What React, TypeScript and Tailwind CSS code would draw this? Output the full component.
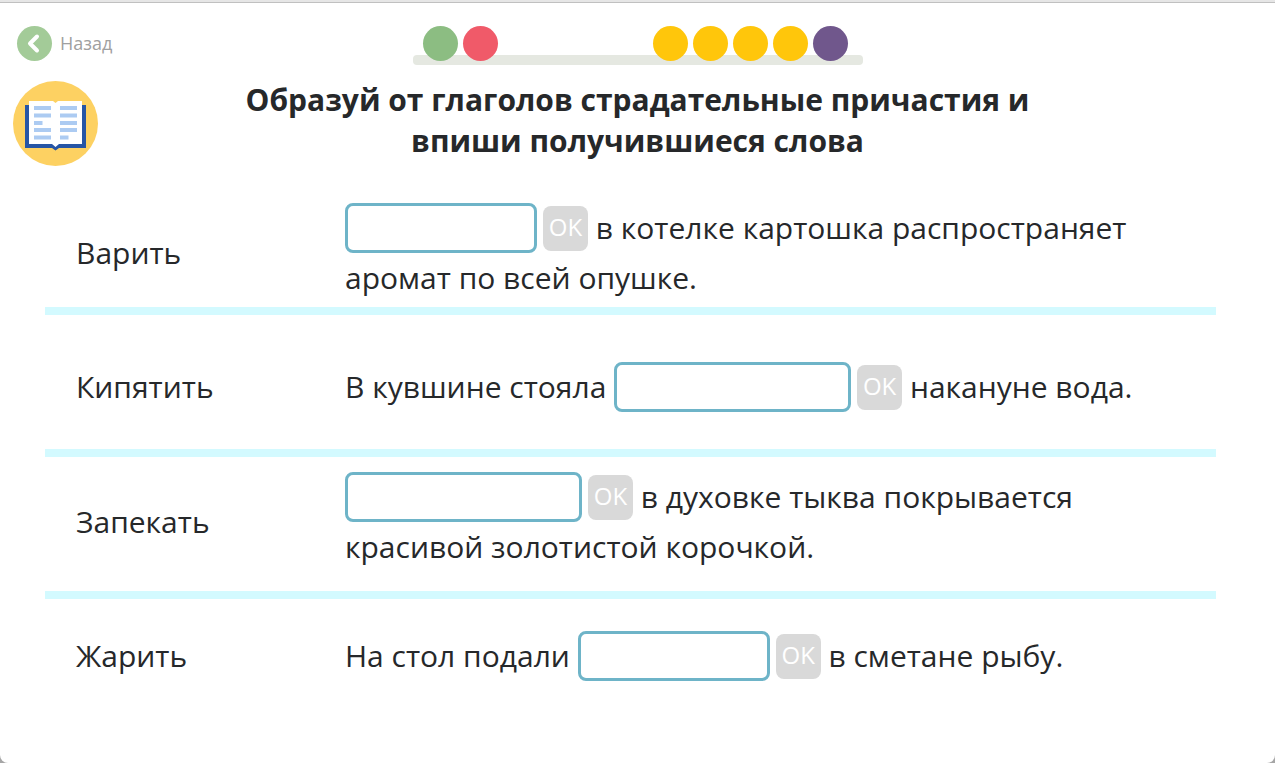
import React, { useState } from 'react';

interface Exercise {
  id: string;
  verb: string;
  before: string;
  after: string;
  inputClass: string;
  rowClass: string;
}

const EXERCISES: Exercise[] = [
  {
    id: 'varit',
    verb: 'Варить',
    before: '',
    after: 'в котелке картошка распространяет аромат по всей опушке.',
    inputClass: 'w-48',
    rowClass: 'pt-[26px] border-b-8',
  },
  {
    id: 'kipyatit',
    verb: 'Кипятить',
    before: 'В кувшине стояла',
    after: 'накануне вода.',
    inputClass: 'w-[237px]',
    rowClass: 'pt-2.5 border-b-8',
  },
  {
    id: 'zapekat',
    verb: 'Запекать',
    before: '',
    after: 'в духовке тыква покрывается красивой золотистой корочкой.',
    inputClass: 'w-[237px]',
    rowClass: 'pb-1 border-b-8',
  },
  {
    id: 'zharit',
    verb: 'Жарить',
    before: 'На стол подали',
    after: 'в сметане рыбу.',
    inputClass: 'w-48',
    rowClass: 'pb-7',
  },
];

const DONE_STEPS = ['bg-[#8cbd82]', 'bg-[#f05a69]'];
const NEXT_STEPS = ['bg-[#ffc60b]', 'bg-[#ffc60b]', 'bg-[#ffc60b]', 'bg-[#ffc60b]', 'bg-[#70578c]'];

const BookIcon: React.FC = () => (
  <svg viewBox="0 0 85 85" className="w-[85px] h-[85px]" aria-hidden="true">
    <circle cx="42.5" cy="42.5" r="42.5" fill="#fdd162" />
    <path d="M12 24h61v43H46l-3.500 2.500L39 67H12z" fill="#2655a5" />
    <path d="M16 20h24l2.500 2 2.500-2h24v43H46l-3.500 3-3.500-3H16z" fill="#fff" />
    <path
      d="M21 25h17v4H21zM21 32.500h17v4H21zM21 40h8.500v4H21zM21 47h17v4H21zM21 54.500h17v4H21zM47 25h17v4H47zM47 32.500h17v4H47zM47 40h17v4H47zM47 47h17v4H47zM47 54.500h8.500v4H47z"
      fill="#accbf2"
    />
  </svg>
);

const Progress: React.FC = () => (
  <div className="relative w-[450px] h-[39px] pl-2.5 pr-[15px] flex justify-between">
    <div className="absolute inset-x-0 bottom-0 h-2.5 rounded bg-[#e5e8e1]" />
    <div className="relative flex gap-[5px]">
      {DONE_STEPS.map((color, i) => (
        <span key={i} className={`w-[35px] h-[35px] rounded-full ${color}`} />
      ))}
    </div>
    <div className="relative flex gap-[5px]">
      {NEXT_STEPS.map((color, i) => (
        <span key={i} className={`w-[35px] h-[35px] rounded-full ${color}`} />
      ))}
    </div>
  </div>
);

const ExerciseRow: React.FC<{ exercise: Exercise }> = ({ exercise }) => {
  const [value, setValue] = useState('');
  const { id, verb, before, after, inputClass, rowClass } = exercise;

  return (
    <div className={`flex items-center min-h-[142px] border-[#d3faff] ${rowClass}`}>
      <label htmlFor={id} className="w-[300px] shrink-0 pl-[31px] leading-[50px]">
        {verb}
      </label>
      <p className="flex-1 pr-8 leading-[50px]">
        {before}
        {before && ' '}
        <input
          id={id}
          type="text"
          value={value}
          onChange={e => setValue(e.target.value)}
          className={`h-[50px] px-3 align-top bg-white border-3 border-[#6eb4c8] rounded-lg outline-none ${inputClass}`}
        />
        <button
          type="button"
          className="w-[45px] h-[45px] mt-[3px] ml-1.5 pb-1 align-top rounded-lg bg-[#d9d9d9] text-white text-2xl leading-none"
        >
          OK
        </button>{' '}
        {after}
      </p>
    </div>
  );
};

export default function App() {
  return (
    <div className="min-h-screen flex flex-col bg-[#a6a6a6] font-['Open_Sans','Noto_Sans',sans-serif] text-[#26282a]">
      <div className="h-[3px] bg-[#e6e6e6] border-b border-[#c0c0c0]" />
      <main className="flex-1 bg-white rounded-b-lg">
        <header className="grid grid-cols-[1fr_auto_1fr] items-start pt-[23px] pl-[17px] pr-4">
          <button type="button" className="flex items-center gap-2 justify-self-start text-lg leading-6 text-[#a0a0a0]">
            <span className="w-[35px] h-[35px] rounded-full bg-[#a3cb98] flex items-center justify-center">
              <svg viewBox="0 0 35 35" className="w-[35px] h-[35px]" aria-hidden="true">
                <path d="M20 10.500L13 17.500l7 7" fill="none" stroke="#fff" strokeWidth="4" strokeLinecap="round" strokeLinejoin="round" />
              </svg>
            </span>
            <span className="pb-0.5">Назад</span>
          </button>
          <Progress />
        </header>

        <div className="flex items-start pt-3.5 px-[13px]">
          <div className="pt-0.5">
            <BookIcon />
          </div>
          <h1 className="flex-1 pr-[85px] text-center text-3xl leading-[41px] font-bold">
            Образуй от глаголов страдательные причастия и
            <br />
            впиши получившиеся слова
          </h1>
        </div>

        <section className="mt-[7px] ml-[45px] mr-[59px] text-3xl">
          {EXERCISES.map(exercise => (
            <ExerciseRow key={exercise.id} exercise={exercise} />
          ))}
        </section>
      </main>
    </div>
  );
}
